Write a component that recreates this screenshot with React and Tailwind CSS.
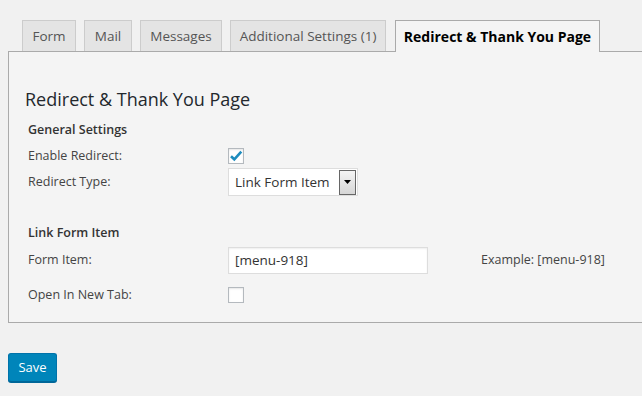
import React from "react";

const font = { fontFamily: '"Open Sans", "Noto Sans", sans-serif' };

function Tab({ label, w, active }) {
  if (active) {
    return (
      <div
        className={`h-[32px] ${w} ml-px -mb-px flex items-center justify-center border border-b-0 border-[#aaaaaa] bg-[#f4f4f4] text-[14px] font-bold text-black`}
      >
        {label}
      </div>
    );
  }
  return (
    <div
      className={`h-[31px] ${w} flex items-center justify-center border border-b-0 border-[#cccccc] bg-[#e4e4e4] text-[13.5px] text-[#555555]`}
    >
      {label}
    </div>
  );
}

function Check({ checked }) {
  return (
    <div className="w-[16px] h-[16px] border border-[#b4b9be] bg-white shadow-[inset_0_1px_2px_rgba(0,0,0,0.1)] flex items-center justify-center">
      {checked && (
        <svg width="14" height="14" viewBox="0 0 14 14">
          <path d="M2 7.2 L5.3 10.3 L12.3 2.6" fill="none" stroke="#1e8cbe" strokeWidth="2.6" strokeLinecap="butt" strokeLinejoin="miter" />
        </svg>
      )}
    </div>
  );
}

export default function App() {
  return (
    <div className="w-[642px] h-[396px] bg-[#f1f1f1] text-[12.5px] text-[#444444] overflow-hidden" style={font}>
      <div className="pt-[20px] pl-[22px] flex items-end gap-[8px]">
        <Tab label="Form" w="w-[54px]" />
        <Tab label="Mail" w="w-[48px]" />
        <Tab label="Messages" w="w-[82px]" />
        <Tab label="Additional Settings (1)" w="w-[156px]" />
        <Tab label="Redirect & Thank You Page" w="w-[205px]" active />
      </div>
      <div className="ml-[8px] w-[700px] border-l border-t border-b border-[#aaaaaa] bg-[#f4f4f4] pt-[35px] pb-[15px]">
        <div className="pl-[16px] h-[24px] flex items-center text-[18px] text-[#23282d]">
          Redirect &amp; Thank You Page
        </div>
        <div className="pl-[19px] mt-[9px] h-[20px] flex items-center font-semibold text-[#333333]">
          General Settings
        </div>
        <div className="pl-[19px] mt-[4px] h-[24px] flex items-center">
          <div className="w-[200px]">Enable Redirect:</div>
          <Check checked />
        </div>
        <div className="pl-[19px] h-[28px] flex items-center">
          <div className="w-[200px]">Redirect Type:</div>
          <div className="w-[130px] h-[28px] bg-white border border-[#dddddd] flex items-center justify-between pl-[6px] pr-px">
            <span className="text-[#333333] text-[13.5px]">Link Form Item</span>
            <div className="w-[17px] h-[25px] border border-[#666666] bg-gradient-to-b from-[#f4f4f4] to-[#d6d6d6] flex items-center justify-center">
              <svg width="7" height="4" viewBox="0 0 7 4">
                <path d="M0 0 H7 L3.5 4 Z" fill="#000" />
              </svg>
            </div>
          </div>
        </div>
        <div className="pl-[19px] mt-[27px] h-[20px] flex items-center font-semibold text-[#333333]">
          Link Form Item
        </div>
        <div className="pl-[19px] mt-[4px] h-[27px] flex items-center">
          <div className="w-[200px]">Form Item:</div>
          <div className="w-[200px] h-[27px] bg-white border border-[#dddddd] shadow-[inset_0_1px_2px_rgba(0,0,0,0.07)] flex items-center pl-[6px] text-[#333333] text-[13.5px]">
            [menu-918]
          </div>
          <div className="ml-[53px]">Example: [menu-918]</div>
        </div>
        <div className="pl-[19px] mt-[9px] h-[24px] flex items-center">
          <div className="w-[200px]">Open In New Tab:</div>
          <Check />
        </div>
      </div>
      <div className="pl-[8px] mt-[30px]">
        <button className="w-[49px] h-[29px] rounded-[3px] bg-[#0085ba] border border-[#0073aa] border-b-[#006799] shadow-[0_1px_0_#006799] text-white text-[13px] flex items-center justify-center">
          Save
        </button>
      </div>
    </div>
  );
}
